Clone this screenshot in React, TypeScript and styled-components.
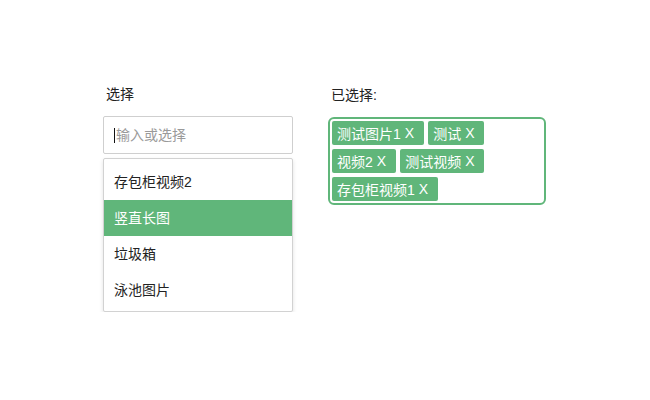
import React from "react";
import styled, { createGlobalStyle } from "styled-components";

const green = "#60b67a";

const GlobalStyle = createGlobalStyle`
  body {
    margin: 0;
    background: #fff;
    font-family: "Liberation Sans", "Noto Sans CJK SC", sans-serif;
    font-size: 14px;
    color: #222;
  }
`;

const Page = styled.div`
  display: flex;
  align-items: flex-start;
  gap: 35px;
  padding: 84px 0 0 103px;
`;

const Column = styled.div<{ $width: number }>`
  flex: none;
  width: ${(p) => p.$width}px;
`;

const Label = styled.div<{ $offset?: number }>`
  line-height: 20px;
  padding-left: 3px;
  margin-top: ${(p) => p.$offset || 0}px;
  margin-bottom: 12px;
`;

const Field = styled.div`
  position: relative;
`;

const Input = styled.input`
  box-sizing: border-box;
  display: block;
  width: 100%;
  height: 38px;
  padding: 0 11px 0 12px;
  border: 1px solid #cfcfcf;
  border-radius: 2px;
  font: inherit;
  font-size: 14px;
  color: #222;
  outline: none;
  &::placeholder {
    color: #9a9a9a;
  }
`;

// blinking text cursor, drawn over the empty field as in the screenshot
const Caret = styled.span`
  position: absolute;
  left: 11px;
  top: 12px;
  width: 1px;
  height: 15px;
  background: #111;
  pointer-events: none;
`;

const Dropdown = styled.ul`
  list-style: none;
  margin: 4px 0 0;
  padding: 5px 0 3px;
  border: 1px solid #d2d2d2;
  border-radius: 2px;
  box-shadow: 0 2px 4px rgba(0, 0, 0, 0.12);
  background: #fff;
`;

const Option = styled.li<{ $active?: boolean }>`
  height: 36px;
  line-height: 36px;
  padding-left: 10px;
  background: ${(p) => (p.$active ? green : "transparent")};
  color: ${(p) => (p.$active ? "#fff" : "#222")};
`;

const Selected = styled.div`
  box-sizing: border-box;
  display: flex;
  flex-wrap: wrap;
  align-content: flex-start;
  border: 2px solid ${green};
  border-radius: 6px;
`;

const Tag = styled.span`
  display: inline-flex;
  align-items: center;
  height: 24px;
  margin: 2px;
  padding: 0 10px 0 5px;
  background: ${green};
  color: #fff;
  border-radius: 2px;
  font-size: 14px;
  white-space: nowrap;
`;

const Remove = styled.span`
  margin-left: 4px;
  cursor: pointer;
`;

const options = ["存包柜视频2", "竖直长图", "垃圾箱", "泳池图片"];
const chosen = ["测试图片1", "测试", "视频2", "测试视频", "存包柜视频1"];

export default function App() {
  return (
    <>
      <GlobalStyle />
      <Page>
        <Column $width={190}>
          <Label>选择</Label>
          <Field>
            <Input placeholder="输入或选择" />
            <Caret />
          </Field>
          <Dropdown>
            {options.map((o) => (
              <Option key={o} $active={o === "竖直长图"}>
                {o}
              </Option>
            ))}
          </Dropdown>
        </Column>
        <Column $width={218}>
          <Label $offset={1}>已选择:</Label>
          <Selected>
            {chosen.map((c) => (
              <Tag key={c}>
                {c}
                <Remove>X</Remove>
              </Tag>
            ))}
          </Selected>
        </Column>
      </Page>
    </>
  );
}
